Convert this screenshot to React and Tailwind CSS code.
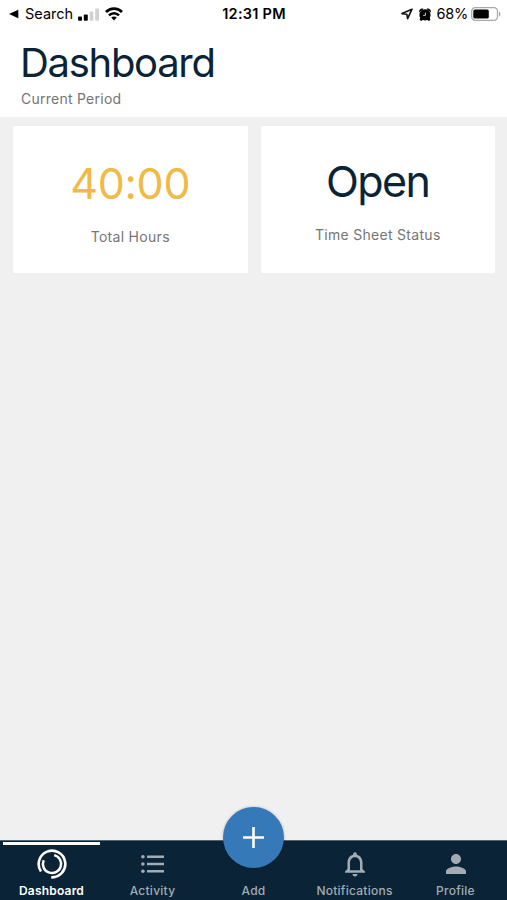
// App.jsx
const BackIcon = () => (
    <svg className="h-[10px] w-[10px]" viewBox="0 0 10 10" fill="currentColor">
        <path d="M0 5L9.3 0.8V9.2Z" />
    </svg>
)

const SignalIcon = () => (
    <svg className="h-[13px] w-[21px]" viewBox="0 0 21 13">
        <rect x="0" y="8.6" width="4" height="4.2" rx="1" />
        <rect x="5.8" y="6.6" width="4" height="6.2" rx="1" />
        <rect x="11.6" y="3.6" width="3.8" height="9.2" rx="1" fill="#d2d2d2" />
        <rect x="17.2" y="0.4" width="3.8" height="12.4" rx="1" fill="#d2d2d2" />
    </svg>
)

const WifiIcon = () => (
    <svg className="h-[14px] w-[18px]" viewBox="0 0 18 14" fill="none" stroke="black">
        <path strokeWidth="2.7" d="M1 5C5.4 0.4 12.6 0.4 17 5" />
        <path strokeWidth="2.5" d="M4 8.3C6.8 5.4 11.2 5.4 14 8.3" />
        <path fill="black" stroke="none" d="M6.2 10.6C7.8 9.1 10.2 9.1 11.8 10.6L9 13.6Z" />
    </svg>
)

const LocationIcon = () => (
    <svg className="h-[12px] w-[12px]" viewBox="0 0 12 12" fill="none" stroke="#111111" strokeWidth="1.6" strokeLinejoin="round">
        <path d="M11 1.2L1 5.6L5.8 6.2L6.6 10.6Z" />
    </svg>
)

const AlarmIcon = () => (
    <svg className="h-[13px] w-[12px]" viewBox="0 0 12 13">
        <circle cx="6" cy="6.9" r="5.6" />
        <path d="M0.2 4.4C-0.3 1.8 1.9 -0.2 4.6 0.9ZM11.8 4.4C12.3 1.8 10.1 -0.2 7.4 0.9ZM1.2 9L4.2 11.4L2.2 13L0.7 12ZM10.8 9L7.8 11.4L9.8 13L11.3 12Z" />
        <path d="M6.4 4.6V7.4H4.2" fill="none" stroke="white" strokeWidth="0.8" />
    </svg>
)

const BatteryIcon = () => (
    <svg className="h-[14px] w-[30px]" viewBox="0 0 30 14">
        <rect x="0.7" y="0.7" width="25.8" height="12.6" rx="3.6" fill="none" stroke="#a8a8a8" strokeWidth="1.3" />
        <rect x="2.3" y="2.4" width="15.5" height="9.2" rx="1.7" />
        <path d="M28 4.7C30 5.4 30 8.6 28 9.3Z" fill="#a8a8a8" />
    </svg>
)

const DashboardIcon = () => (
    <svg className="h-8 w-8" viewBox="0 0 32 32" fill="none" stroke="currentColor">
        <path strokeWidth="2.6" d="M5 23.5A13.3 13.3 0 1 1 15.2 29.3" />
        <path strokeWidth="2.5" d="M18.2 7.1A9.1 9.1 0 1 1 7.7 12.2" />
    </svg>
)

const ActivityIcon = () => (
    <svg className="h-[18px] w-[23px]" viewBox="0 0 23 18" fill="currentColor">
        <circle cx="1.9" cy="1.8" r="1.8" />
        <circle cx="1.9" cy="9" r="1.8" />
        <circle cx="1.9" cy="16.2" r="1.8" />
        <path d="M6 0.6H23V3H6ZM6 7.8H23V10.2H6ZM6 15H23V17.4H6Z" />
    </svg>
)

const BellIcon = () => (
    <svg className="h-[30px] w-[30px]" viewBox="0 0 24 24" fill="currentColor">
        <path d="M12 22c1.1 0 2-.9 2-2h-4c0 1.1.9 2 2 2zm6-6v-5c0-3.07-1.63-5.64-4.5-6.32V4c0-.83-.67-1.5-1.5-1.5s-1.5.67-1.5 1.5v.68C7.64 5.36 6 7.92 6 11v5l-2 2v1h16v-1l-2-2zm-2 1H8v-6c0-2.48 1.51-4.5 4-4.5s4 2.02 4 4.5v6z" />
    </svg>
)

const ProfileIcon = () => (
    <svg className="h-[30px] w-[30px]" viewBox="0 0 24 24" fill="currentColor">
        <path d="M12 12c2.21 0 4-1.79 4-4s-1.79-4-4-4-4 1.79-4 4 1.79 4 4 4zm0 2c-2.67 0-8 1.34-8 4v2h16v-2c0-2.66-5.33-4-8-4z" />
    </svg>
)

const tabs = [
    { label: 'Dashboard', icon: DashboardIcon, active: true },
    { label: 'Activity', icon: ActivityIcon },
    { label: 'Add' },
    { label: 'Notifications', icon: BellIcon },
    { label: 'Profile', icon: ProfileIcon },
]

const StatusBar = () => (
    <div className="grid h-7 grid-cols-3 items-center pl-[9px] pr-[6px] text-[14.5px] text-black">
        <div className="flex items-center">
            <BackIcon />
            <span className="ml-[6px] w-[49px] whitespace-nowrap">Search</span>
            <span className="ml-1"><SignalIcon /></span>
            <span className="ml-[6px]"><WifiIcon /></span>
        </div>
        <span className="whitespace-nowrap pr-[2px] text-center font-semibold tracking-[0.25px]">12:31 PM</span>
        <div className="flex items-center justify-end">
            <LocationIcon />
            <span className="ml-[6px]"><AlarmIcon /></span>
            <span className="ml-[5px] mr-[3px] tracking-[-0.2px]">68%</span>
            <BatteryIcon />
        </div>
    </div>
)

const StatCard = ({ value, label, className }) => (
    <section className={`flex h-[147px] flex-col items-center rounded-[2px] bg-white ${className}`}>
        {value}
        <p className="text-[14px] leading-5 tracking-[0.3px] text-[#757575]">{label}</p>
    </section>
)

const TabBar = () => (
    <nav className="relative grid h-[60px] grid-cols-5 border-t border-[#53636f] bg-[#0b2336] px-[1px]">
        {tabs.map(({ label, icon: Icon, active }) => (
            <button key={label} className={`relative flex flex-col items-center ${active ? 'text-white' : 'text-[#a3acb4]'}`}>
                {active && <span className="absolute top-[1px] left-[2px] h-[2.5px] w-[97px] bg-white" />}
                <span className="mt-[7px] flex h-8 items-center justify-center">{Icon && <Icon />}</span>
                <span className={`mt-[3px] text-[12px] leading-4 ${active ? 'font-semibold tracking-[0.2px]' : 'font-medium tracking-[0.25px]'}`}>{label}</span>
            </button>
        ))}
        {/* Floating add button */}
        <span className="absolute -top-[34px] left-[223px] flex h-[61px] w-[61px] items-center justify-center rounded-full bg-[#3579b8] shadow-[0_0_3px_rgba(0,0,0,0.25)]">
            <svg className="h-[21px] w-[21px]" viewBox="0 0 21 21" fill="none" stroke="white" strokeWidth="2.6">
                <path d="M10.5 0V21M0 10.5H21" />
            </svg>
        </span>
    </nav>
)

const App = () => (
    <div className="flex h-screen flex-col bg-[#f0f0f0] font-['Inter',sans-serif]">
        <header className="h-[117px] bg-white">
            <StatusBar />
            <div className="pl-[20px]">
                <h1 className="mt-[10px] text-[40px] leading-[50px] tracking-[-1.3px] text-[#0b2336]">Dashboard</h1>
                <p className="mt-px ml-px text-[14px] leading-5 tracking-[0.25px] text-[#757575]">Current Period</p>
            </div>
        </header>
        <main className="grid flex-1 grid-cols-2 content-start gap-[13px] pl-[13px] pr-[12px] pt-[9px]">
            <StatCard
                className="pt-[32px]"
                label="Total Hours"
                value={<p className="mb-[19px] text-[43px] leading-[50px] tracking-[-0.3px] text-[#efba46]">40:00</p>}
            />
            <StatCard
                className="pt-[30px]"
                label="Time Sheet Status"
                value={<p className="mb-[19px] text-[43px] leading-[50px] tracking-[-1.6px] text-[#0b2336]">Open</p>}
            />
        </main>
        <TabBar />
    </div>
)

export default App
